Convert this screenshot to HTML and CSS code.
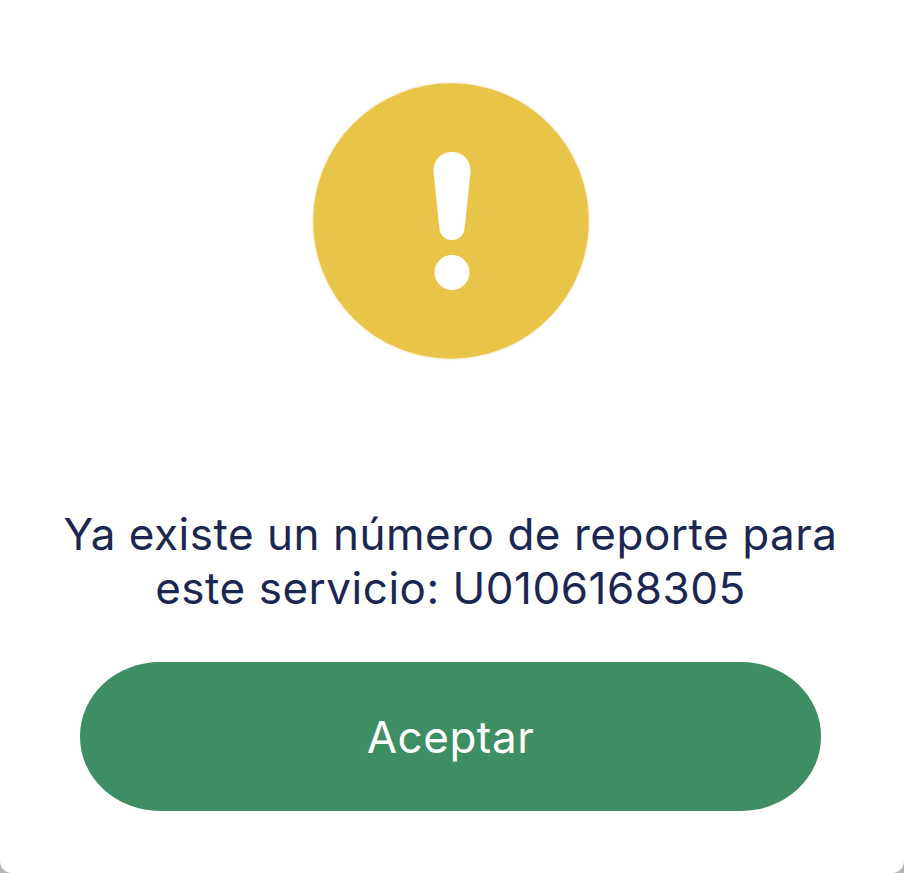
FILE: index.html
```html
<!DOCTYPE html>
<html>

<head>
	<meta charset="utf-8" />
	<link rel="stylesheet" href="styles.css">
</head>

<body>

	<div class="dialog">
		<svg class="alert-icon" width="280" height="280" viewBox="0 0 280 280">
			<circle cx="140" cy="140" r="138.5" fill="#e8c448" stroke="#f9f3e0" stroke-width="1.5" />
			<path d="M141 71c11 0 19 8 18.500 20l-6 57c-.6 6-5.500 11-12.500 11s-11.900-5-12.500-11l-6-57c-.5-12 7.500-20 18.500-20z" fill="#fff" />
			<circle cx="141" cy="191.500" r="17.500" fill="#fff" />
		</svg>

		<p class="message">Ya existe un número de reporte para este servicio: U0106168305</p>

		<button class="accept-btn" type="button">Aceptar</button>
	</div>

</body>

</html>
```

FILE: styles.css
```css
html,
body {
	margin: 0;
	height: 100%;
}

body {
	background-color: #b4b4b4;
	font-family: Inter, sans-serif;
	overflow: hidden;
}

.dialog {
	height: 873px;
	box-sizing: border-box;
	padding: 81px 3px 0 0;
	background-color: #fff;
	border-radius: 0 0 12px 12px;
	display: flex;
	flex-direction: column;
	align-items: center;
}

.alert-icon {
	display: block;
	flex: none;
}

.message {
	width: 820px;
	margin: 146px 0 0;
	font-size: 44px;
	line-height: 54px;
	letter-spacing: 0.52px;
	text-align: center;
	color: #1b2751;
}

.accept-btn {
	width: 741px;
	height: 149px;
	margin-top: 47px;
	border: 0;
	border-radius: 80px / 74px;
	background-color: #3e8e63;
	color: #fff;
	font-family: Inter, sans-serif;
	font-size: 44px;
	letter-spacing: 0.5px;
}
```
